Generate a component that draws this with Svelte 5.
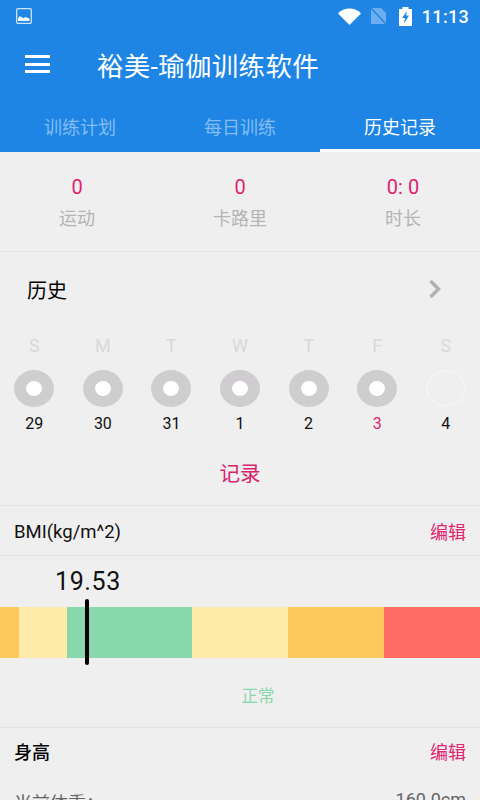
<script>
	const tabs = ['训练计划', '每日训练', '历史记录'];
	const stats = [
		{ value: '0', label: '运动' },
		{ value: '0', label: '卡路里' },
		{ value: '0: 0', label: '时长' }
	];
	const days = [
		{ letter: 'S', date: '29', done: true },
		{ letter: 'M', date: '30', done: true },
		{ letter: 'T', date: '31', done: true },
		{ letter: 'W', date: '1', done: true },
		{ letter: 'T', date: '2', done: true },
		{ letter: 'F', date: '3', done: true, today: true },
		{ letter: 'S', date: '4', done: false }
	];
	const bands = [
		{ color: '#fec95c', width: 19 },
		{ color: '#feebaa', width: 48 },
		{ color: '#89d7ac', width: 125 },
		{ color: '#feebaa', width: 96 },
		{ color: '#fec95c', width: 96 },
		{ color: '#fe6c65', width: 96 }
	];
</script>

<div class="screen">
	<header class="appbar">
		<div class="status">
			<svg class="pic" viewBox="0 0 16 16" width="16" height="16">
				<rect x="0.7" y="0.7" width="14.6" height="14.6" rx="1" fill="none" stroke="#cfe3f8" stroke-width="1.3" />
				<path d="M2 13v-3l2-2 2 1.500 1.500 0.500 2-1 4 1.500v2.500z" fill="#f2f7fd" />
			</svg>
			<div class="status-right">
				<svg class="wifi" viewBox="0 0 23 17" width="23" height="17">
					<path d="M0 5.500C3 2.300 7 0.500 11.500 0.500S20 2.300 23 5.500L11.500 17z" fill="#fff" />
				</svg>
				<svg class="sim" viewBox="0 0 17 18" width="17" height="18">
					<path d="M1 1h10l5 5v11H1z" fill="#6eaef0" />
					<path d="M0 0l17 18" stroke="#1e85e5" stroke-width="1.500" />
				</svg>
				<svg class="battery" viewBox="0 0 13 19" width="13" height="19">
					<path d="M0 2h3.500V0h6v2H13v17H0z" fill="#fff" />
					<path d="M8 4L3 11H6L5 16.500L10 8.500H7z" fill="#1e85e5" />
				</svg>
				<span class="time">11:13</span>
			</div>
		</div>
		<div class="toolbar">
			<div class="burger"><i></i><i></i><i></i></div>
			<h1>裕美-瑜伽训练软件</h1>
		</div>
		<nav class="tabs">
			{#each tabs as tab, i}
				<div class="tab" class:active={i === 2}>{tab}</div>
			{/each}
		</nav>
	</header>

	<section class="stats">
		{#each stats as stat}
			<div class="stat">
				<div class="stat-value">{stat.value}</div>
				<div class="stat-label">{stat.label}</div>
			</div>
		{/each}
	</section>

	<section class="history">
		<div class="history-head">
			<span>历史</span>
			<svg viewBox="0 0 14 20" width="14" height="20">
				<path d="M2.500 2L10.500 10l-8 8" fill="none" stroke="#b2b2b2" stroke-width="3.500" />
			</svg>
		</div>
		<div class="week">
			{#each days as day}
				<div class="day">
					<div class="letter">{day.letter}</div>
					<div class="ring" class:done={day.done}></div>
					<div class="date" class:today={day.today}>{day.date}</div>
				</div>
			{/each}
		</div>
		<div class="record">记录</div>
	</section>

	<section class="row-head">
		<span class="latin">BMI(kg/m^2)</span>
		<span class="edit">编辑</span>
	</section>

	<section class="bmi">
		<div class="bmi-value">19.53</div>
		<div class="scale">
			{#each bands as band}
				<div class="band" style="width: {band.width}px; background: {band.color}"></div>
			{/each}
			<div class="marker"></div>
		</div>
		<div class="bmi-state">正常</div>
	</section>

	<section class="height">
		<div class="height-head">
			<span class="height-title">身高</span>
			<span class="edit">编辑</span>
		</div>
		<div class="height-row">
			<span>当前体重：</span>
			<span>160.0cm</span>
		</div>
	</section>
</div>

<style>
	:global(body) {
		margin: 0;
		background: #efefef;
	}

	.screen {
		width: 480px;
		height: 800px;
		overflow: hidden;
		background: #efefef;
		font-family: Roboto, "Noto Sans CJK SC", sans-serif;
	}

	.appbar {
		background: #1e85e5;
		color: #fff;
		height: 152px;
		display: flex;
		flex-direction: column;
	}

	.status {
		height: 32px;
		padding: 0 11px 0 16px;
		display: flex;
		align-items: center;
		justify-content: space-between;
	}

	.status-right {
		display: flex;
		align-items: center;
	}

	.sim {
		margin-left: 9px;
	}

	.battery {
		margin-left: 12px;
	}

	.time {
		margin-left: 10px;
		font-size: 18px;
		letter-spacing: 0.3px;
		font-weight: 500;
	}

	.toolbar {
		flex: 1;
		display: flex;
		align-items: center;
		padding: 0 0 8px 25px;
	}

	.burger {
		width: 25px;
		display: flex;
		flex-direction: column;
		gap: 4.500px;
		margin-right: 47px;
	}

	.burger i {
		display: block;
		height: 3px;
		background: #fff;
	}

	h1 {
		margin: 0;
		font-size: 26.500px;
		font-weight: 400;
		letter-spacing: 0.3px;
	}

	.tabs {
		display: flex;
		height: 48px;
	}

	.tab {
		flex: 1;
		display: flex;
		align-items: center;
		justify-content: center;
		font-size: 18px;
		color: #86bdf1;
		box-sizing: border-box;
		padding-bottom: 5px;
	}

	.tab.active {
		color: #fff;
		border-bottom: 3px solid #fff;
		padding-bottom: 2px;
	}

	.stats {
		display: grid;
		grid-template-columns: repeat(3, 163px);
		justify-content: center;
		height: 100px;
		border-bottom: 1px solid #e6e6e6;
		box-sizing: border-box;
	}

	.stat {
		text-align: center;
		padding-top: 23px;
	}

	.stat-value {
		font-size: 20px;
		color: #e0226e;
		line-height: 24px;
	}

	.stat-label {
		font-size: 18px;
		color: #b4b4b4;
		margin-top: 5px;
	}

	.history {
		height: 254px;
		border-bottom: 1px solid #e4e4e4;
		box-sizing: border-box;
	}

	.history-head {
		height: 74px;
		display: flex;
		align-items: center;
		justify-content: space-between;
		padding: 0 38px 0 27px;
		font-size: 20px;
		color: #000;
	}

	.week {
		display: flex;
		padding-top: 10px;
	}

	.day {
		width: 68.600px;
		display: flex;
		flex-direction: column;
		align-items: center;
	}

	.letter {
		font-size: 18px;
		color: #d8d8d8;
		line-height: 20px;
		margin-bottom: 14px;
	}

	.ring {
		width: 40px;
		height: 37px;
		border-radius: 50%;
		box-sizing: border-box;
		border: 2px solid #f3f3f3;
	}

	.ring.done {
		border-width: 11px 12px;
		border-color: #cfcdcf;
		background: #fff;
	}

	.date {
		font-size: 16px;
		color: #111;
		margin-top: 8px;
		line-height: 18px;
	}

	.date.today {
		color: #e0226e;
	}

	.record {
		text-align: center;
		font-size: 20.500px;
		color: #d9246b;
		margin-top: 24px;
	}

	.row-head {
		height: 50px;
		border-bottom: 1px solid #e4e4e4;
		box-sizing: border-box;
		display: flex;
		align-items: center;
		justify-content: space-between;
		padding: 0 14px;
		font-size: 18.500px;
		color: #111;
	}

	.latin {
		padding-top: 2px;
	}

	.edit {
		color: #e0266f;
		font-size: 18px;
	}

	.bmi {
		height: 172px;
		border-bottom: 1px solid #e4e4e4;
		box-sizing: border-box;
	}

	.bmi-value {
		font-size: 25px;
		color: #111;
		padding: 11px 0 0 55px;
		line-height: 30px;
		letter-spacing: 0.6px;
	}

	.scale {
		position: relative;
		display: flex;
		height: 51px;
		margin-top: 10px;
	}

	.band {
		height: 100%;
	}

	.marker {
		position: absolute;
		left: 85px;
		top: -8px;
		width: 4px;
		height: 66px;
		border-radius: 2px;
		background: #000;
	}

	.bmi-state {
		text-align: center;
		padding-left: 36px;
		margin-top: 25px;
		font-size: 16.500px;
		color: #89d7ac;
	}

	.height-head {
		height: 46px;
		display: flex;
		align-items: center;
		justify-content: space-between;
		padding: 0 14px;
		font-size: 18px;
		color: #000;
	}

	.height-title {
		font-weight: 500;
	}

	.height-row {
		display: flex;
		justify-content: space-between;
		padding: 15px 14px;
		font-size: 18px;
		color: #666;
	}
</style>
